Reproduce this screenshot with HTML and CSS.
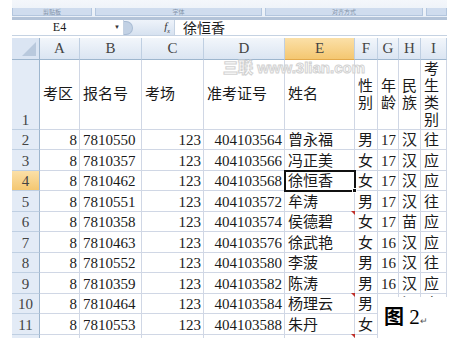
FILE: index.html
```html
<!DOCTYPE html>
<html lang="zh">
<head>
  <meta charset="UTF-8" />
  <title>考生名单</title>
  <link rel="stylesheet" href="styles.css">
</head>
<body>
  <div class="page">
    <div class="ribbon">
      <div class="groups">
        <span class="group g1">剪贴板</span>
        <span class="group g2">字体</span>
        <span class="group g3">对齐方式</span>
        <span class="group g4"></span>
      </div>
    </div>

    <div class="formula-bar">
      <div class="name-box">E4<span class="arrow">&#9660;</span></div>
      <div class="fx-area"><span class="knob"></span><span class="fx">f<sub>x</sub></span></div>
      <div class="formula">徐恒香</div>
    </div>

    <div class="sheet">
      <div class="corner"></div>
      <div class="ch">A</div><div class="ch">B</div><div class="ch">C</div><div class="ch">D</div>
      <div class="ch active">E</div><div class="ch">F</div><div class="ch">G</div><div class="ch">H</div><div class="ch">I</div>

      <div class="rh">1</div>
      <div class="c hd">考区</div><div class="c hd">报名号</div><div class="c hd">考场</div><div class="c hd">准考证号</div>
      <div class="c hd">姓名</div><div class="c hd">性别</div><div class="c hd">年龄</div><div class="c hd">民族</div><div class="c hd">考生类别</div>

      <div class="rh">2</div>
      <div class="c r">8</div><div class="c">7810550</div><div class="c r">123</div><div class="c r">404103564</div>
      <div class="c">曾永福</div><div class="c">男</div><div class="c">17</div><div class="c">汉</div><div class="c">往</div>

      <div class="rh">3</div>
      <div class="c r">8</div><div class="c">7810357</div><div class="c r">123</div><div class="c r">404103566</div>
      <div class="c">冯正美</div><div class="c">女</div><div class="c">17</div><div class="c">汉</div><div class="c">应</div>

      <div class="rh active">4</div>
      <div class="c r">8</div><div class="c">7810462</div><div class="c r">123</div><div class="c r">404103568</div>
      <div class="c sel">徐恒香</div><div class="c">女</div><div class="c">17</div><div class="c">汉</div><div class="c">应</div>

      <div class="rh">5</div>
      <div class="c r">8</div><div class="c">7810551</div><div class="c r">123</div><div class="c r">404103572</div>
      <div class="c">牟涛</div><div class="c">男</div><div class="c">17</div><div class="c">汉</div><div class="c">往</div>

      <div class="rh">6</div>
      <div class="c r">8</div><div class="c">7810358</div><div class="c r">123</div><div class="c r">404103574</div>
      <div class="c note">侯德碧</div><div class="c">女</div><div class="c">17</div><div class="c">苗</div><div class="c">应</div>

      <div class="rh">7</div>
      <div class="c r">8</div><div class="c">7810463</div><div class="c r">123</div><div class="c r">404103576</div>
      <div class="c">徐武艳</div><div class="c">女</div><div class="c">16</div><div class="c">汉</div><div class="c">应</div>

      <div class="rh">8</div>
      <div class="c r">8</div><div class="c">7810552</div><div class="c r">123</div><div class="c r">404103580</div>
      <div class="c">李菠</div><div class="c">男</div><div class="c">16</div><div class="c">汉</div><div class="c">往</div>

      <div class="rh">9</div>
      <div class="c r">8</div><div class="c">7810359</div><div class="c r">123</div><div class="c r">404103582</div>
      <div class="c">陈涛</div><div class="c">男</div><div class="c">16</div><div class="c">汉</div><div class="c">应</div>

      <div class="rh">10</div>
      <div class="c r">8</div><div class="c">7810464</div><div class="c r">123</div><div class="c r">404103584</div>
      <div class="c note">杨理云</div><div class="c">男</div><div class="c">16</div><div class="c">汉</div><div class="c">应</div>

      <div class="rh">11</div>
      <div class="c r">8</div><div class="c">7810553</div><div class="c r">123</div><div class="c r">404103588</div>
      <div class="c">朱丹</div><div class="c">女</div><div class="c"></div><div class="c"></div><div class="c"></div>

      <div class="rh"></div>
      <div class="c"></div><div class="c"></div><div class="c"></div><div class="c"></div>
      <div class="c note"></div><div class="c"></div><div class="c"></div><div class="c"></div><div class="c"></div>
    </div>

    <div class="watermark"><b>三联</b> www.3lian.com</div>
    <div class="caption"><span class="fig">图</span> 2<span class="ret">&#8629;</span></div>
  </div>
</body>
</html>
```

FILE: styles.css
```css
body {
  margin: 0;
  background: #fff;
  font-family: "Liberation Serif", "Noto Sans CJK SC", serif;
  color: #1a1a1a;
}
.page {
  position: relative;
  width: 455px;
  height: 340px;
  overflow: hidden;
}

/* ribbon strip at the top */
.ribbon {
  margin-left: 12px;
  width: 435px;
  height: 20px;
  padding-top: 8px;
  box-sizing: border-box;
  background: linear-gradient(#f4f7fb, #e9eff7);
  border-bottom: 3px solid #b3c3d8;
}
.groups {
  display: flex;
  height: 8px;
  gap: 3px;
}
.group {
  display: flex;
  justify-content: center;
  align-items: center;
  background: #cfdcee;
  border: 1px solid #b3c6de;
  border-top: none;
  font-family: "Noto Sans CJK SC", sans-serif;
  font-size: 6px;
  line-height: 1;
  color: #8393a8;
}
.g1 { width: 78px; }
.g2 { width: 165px; }
.g3 { width: 156px; }
.g4 { flex: 1; }

/* formula bar */
.formula-bar {
  display: flex;
  margin-left: 12px;
  width: 435px;
  height: 15px;
  border-bottom: 1px solid #c5d2e2;
}
.name-box {
  position: relative;
  width: 111px;
  text-align: center;
  padding-right: 16px;
  box-sizing: border-box;
  font-size: 12px;
  line-height: 15px;
  background: #fff;
}
.arrow {
  position: absolute;
  right: 3px;
  top: 0;
  font-size: 6px;
  color: #333;
}
.fx-area {
  display: flex;
  align-items: center;
  justify-content: space-between;
  width: 52px;
  padding-right: 4px;
  box-sizing: border-box;
  background: linear-gradient(#eef3fa, #d7e2f0);
  border-left: 1px solid #c5d2e2;
  border-right: 1px solid #c5d2e2;
}
.knob {
  width: 8px;
  height: 12px;
  border-radius: 0 8px 8px 0;
  background: #c2d1e4;
  border: 1px solid #a9bcd4;
  border-left: none;
}
.fx {
  font-style: italic;
  font-size: 11px;
  color: #333;
}
.fx sub {
  font-size: 6px;
}
.formula {
  flex: 1;
  padding-left: 8px;
  font-family: "Noto Sans CJK SC", sans-serif;
  font-size: 14px;
  line-height: 15px;
  background: #fff;
}

/* worksheet grid */
.sheet {
  display: grid;
  grid-template-columns: 28px 40px 62px 62px 81px 70px 23px 21px 22px 26px;
  grid-template-rows: 22px 70px repeat(5, 20px 21px) 20px;
  margin-left: 12px;
  margin-top: 2px;
  width: 435px;
  height: 300px;
  overflow: hidden;
}
.corner {
  position: relative;
  background: #dbe5f3;
  border-right: 1px solid #9eb6ce;
  border-bottom: 1px solid #9eb6ce;
}
.corner::after {
  content: "";
  position: absolute;
  right: 3px;
  bottom: 3px;
  border-left: 14px solid transparent;
  border-bottom: 14px solid #b9c9dd;
}
.ch {
  display: flex;
  justify-content: center;
  align-items: center;
  background: linear-gradient(#f2f6fb, #dbe5f2);
  border-right: 1px solid #bfcfe2;
  border-bottom: 1px solid #9eb6ce;
  font-size: 15px;
  color: #444;
}
.ch.active {
  background: linear-gradient(#fbe0a8, #f4c771);
  border-bottom-color: #e2a94b;
}
.rh {
  display: flex;
  justify-content: center;
  align-items: flex-end;
  background: #e3ebf6;
  border-right: 1px solid #9eb6ce;
  border-bottom: 1px solid #bfcfe2;
  font-size: 15px;
  line-height: 18px;
  color: #444;
}
.rh.active {
  background: linear-gradient(#fbe0a8, #f4c771);
}
.c {
  position: relative;
  display: flex;
  align-items: flex-end;
  padding: 0 2px 0 3px;
  border-right: 1px solid #d0d7e5;
  border-bottom: 1px solid #d0d7e5;
  font-size: 15px;
  line-height: 18px;
  white-space: nowrap;
  overflow: visible;
}
.c.r {
  justify-content: flex-end;
}
.c.hd {
  align-items: center;
  white-space: normal;
  line-height: 17px;
  overflow: hidden;
}
.c.sel {
  outline: 2px solid #111;
  outline-offset: -1px;
  z-index: 1;
}
.c.sel::after {
  content: "";
  position: absolute;
  right: -3px;
  bottom: -3px;
  width: 5px;
  height: 5px;
  background: #111;
  border: 1px solid #fff;
  box-sizing: border-box;
}
.c.note::before {
  content: "";
  position: absolute;
  right: -1px;
  top: -1px;
  border-left: 4px solid transparent;
  border-top: 4px solid #c0302a;
}

/* overlays */
.watermark {
  position: absolute;
  left: 223px;
  top: 56px;
  font-family: "Liberation Sans", "Noto Sans CJK SC", sans-serif;
  font-weight: bold;
  font-size: 15px;
  color: rgba(255, 255, 255, 0.7);
  -webkit-text-stroke: 1px #d2d2d2;
  white-space: nowrap;
}
.caption {
  position: absolute;
  left: 378px;
  top: 297px;
  width: 77px;
  height: 43px;
  padding: 6px 0 0 6px;
  box-sizing: border-box;
  background: #fff;
  font-size: 21px;
  line-height: 26px;
  color: #000;
}
.fig {
  font-family: "Noto Sans CJK SC", sans-serif;
  font-weight: bold;
  font-size: 20px;
}
.ret {
  font-size: 9px;
  color: #555;
}
```
